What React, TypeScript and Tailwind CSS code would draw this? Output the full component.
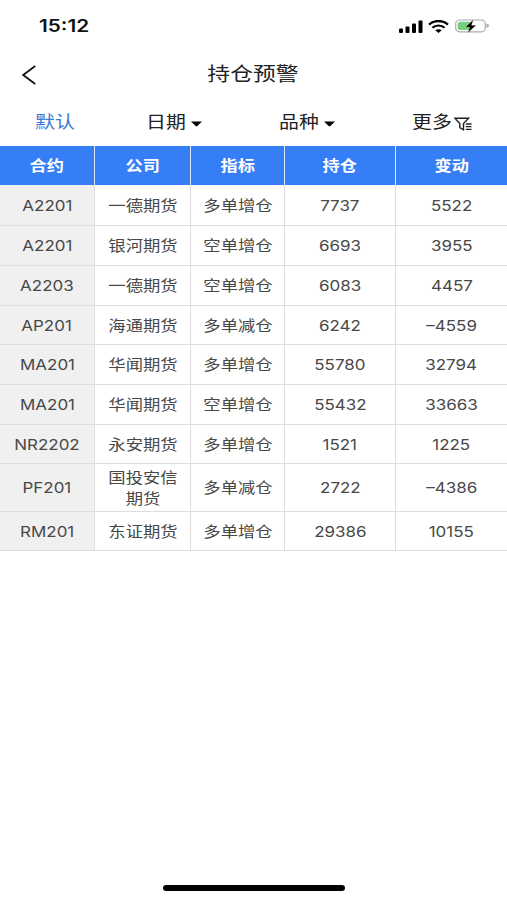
import type { ReactNode } from "react";

const columns = ["合约", "公司", "指标", "持仓", "变动"];

const rows: { height: string; cells: string[] }[] = [
  { height: "h-[41px]", cells: ["A2201", "一德期货", "多单增仓", "7737", "5522"] },
  { height: "h-10", cells: ["A2201", "银河期货", "空单增仓", "6693", "3955"] },
  { height: "h-10", cells: ["A2203", "一德期货", "空单增仓", "6083", "4457"] },
  { height: "h-[39px]", cells: ["AP201", "海通期货", "多单减仓", "6242", "–4559"] },
  { height: "h-10", cells: ["MA201", "华闻期货", "多单增仓", "55780", "32794"] },
  { height: "h-10", cells: ["MA201", "华闻期货", "空单增仓", "55432", "33663"] },
  { height: "h-[39px]", cells: ["NR2202", "永安期货", "多单增仓", "1521", "1225"] },
  { height: "h-12", cells: ["PF201", "国投安信期货", "多单减仓", "2722", "–4386"] },
  { height: "h-[39px]", cells: ["RM201", "东证期货", "多单增仓", "29386", "10155"] },
];

const grid = "grid grid-cols-[95px_96px_94px_111px_111px]";

function Wide({ children, className = "" }: { children: ReactNode; className?: string }) {
  return <span className={`inline-block scale-x-[1.17] ${className}`}>{children}</span>;
}

function StatusBar() {
  return (
    <div className="flex h-[52px] items-center justify-between pl-[39px] pr-[18px]">
      <span className="origin-left scale-x-[1.22] pt-px text-[17px] font-semibold leading-none text-[#111]">15:12</span>
      <div className="flex items-center">
        <svg width="24" height="13" viewBox="0 0 24 13">
          <rect x="0" y="8.5" width="4" height="4.5" rx="1.1" />
          <rect x="6.5" y="6.5" width="4" height="6.5" rx="1.1" />
          <rect x="13" y="3.5" width="4" height="9.5" rx="1.1" />
          <rect x="19.5" y="0.5" width="4" height="12.5" rx="1.1" />
        </svg>
        <svg className="ml-[5px]" width="21" height="13" viewBox="0 0 21 13" fill="none" stroke="#000">
          <path d="M1 4.6C6.2 -0.2 14.8 -0.2 20 4.6" strokeWidth="2.3" />
          <path d="M4.4 7.8C7.8 4.7 13.2 4.7 16.6 7.8" strokeWidth="2.2" />
          <path d="M7.2 10.2C9 8.8 12 8.8 13.8 10.2L10.5 13Z" fill="#000" stroke="none" />
        </svg>
        <svg className="ml-[6px]" width="34" height="16" viewBox="0 0 34 16">
          <rect x="0.7" y="2" width="29.6" height="11.8" rx="3.8" fill="#fff" stroke="#aaa" strokeWidth="1.2" />
          <path d="M5 3.8H15V12H5Q2.7 12 2.7 9.5V6.3Q2.7 3.8 5 3.8Z" fill="#72cf7b" />
          <path d="M31.5 5.6Q34 6.2 34 7.8T31.5 10Z" fill="#aaa" />
          <path d="M18.4 1.4L10.5 9.2H14.8L12.6 15L21.2 7.2H16.6Z" fill="#000" stroke="#fff" strokeWidth="0.3" />
        </svg>
      </div>
    </div>
  );
}

function Caret() {
  return (
    <svg width="11" height="6" viewBox="0 0 11 6">
      <path d="M0 0.5H11L6.3 5.1Q5.5 5.8 4.7 5.1Z" />
    </svg>
  );
}

function FilterIcon() {
  return (
    <svg width="18" height="14" viewBox="0 0 18 14" fill="none" stroke="#222" strokeWidth="1.4">
      <path d="M0.8 1.2H14.6L9.5 6.6V12.8L5.8 10.6V6.6Z" />
      <path d="M11.8 7H17.5M11.8 9.7H17.5M11.8 12.4H17.5" strokeWidth="1.3" />
    </svg>
  );
}

export default function App() {
  return (
    <div className="flex h-[900px] w-[507px] flex-col overflow-hidden bg-white font-['Inter','Noto_Sans_CJK_SC',sans-serif]">
      <StatusBar />
      <header className="grid h-11 grid-cols-[1fr_auto_1fr] items-center">
        <svg className="ml-[22px] mt-px" width="14" height="20" viewBox="0 0 14 20" fill="none" stroke="#111" strokeWidth="1.7">
          <path d="M13.2 1L1.2 10L13.2 19" />
        </svg>
        <h1 className="scale-x-[1.17] pt-0.5 text-[19.5px] leading-none text-[#222]">持仓预警</h1>
      </header>
      <nav className="flex h-[50px] items-center pt-0.5 text-[17px] leading-none text-[#222]">
        <div className="w-[109px] text-center text-[#3c7bd5]">
          <Wide>默认</Wide>
        </div>
        <div className="flex w-[133px] items-center justify-center gap-2">
          <Wide>日期</Wide>
          <span className="pt-1"><Caret /></span>
        </div>
        <div className="flex w-[133px] items-center justify-center gap-2">
          <Wide>品种</Wide>
          <span className="pt-1"><Caret /></span>
        </div>
        <div className="flex w-[132px] items-center justify-center gap-[5px] pl-1">
          <Wide>更多</Wide>
          <span className="pt-1"><FilterIcon /></span>
        </div>
      </nav>
      <main>
        <div className={`${grid} h-[39px] bg-[#367ef5]`}>
          {columns.map((name, i) => (
            <div
              key={name}
              className={`flex items-center justify-center pt-px text-[14.7px] font-bold leading-none text-white ${i < 4 ? "border-r border-[#dce8fb]" : ""}`}
            >
              <Wide>{name}</Wide>
            </div>
          ))}
        </div>
        {rows.map((row, r) => (
          <div key={r} className={`${grid} ${row.height}`}>
            {row.cells.map((cell, i) => (
              <div
                key={i}
                className={`flex items-center justify-center border-b border-[#dedede] pt-0.5 text-[#484848] ${i < 4 ? "border-r" : ""} ${i === 0 ? "bg-[#f0f0f0]" : ""}`}
              >
                {i === 1 || i === 2 ? (
                  <Wide className="w-[60px] text-center text-[14.8px] leading-[21px]">{cell}</Wide>
                ) : (
                  <Wide className="text-[14.5px] leading-none">{cell}</Wide>
                )}
              </div>
            ))}
          </div>
        ))}
      </main>
      <div className="mx-auto mt-auto mb-[9px] h-[6px] w-[182px] rounded-full bg-black" />
    </div>
  );
}
